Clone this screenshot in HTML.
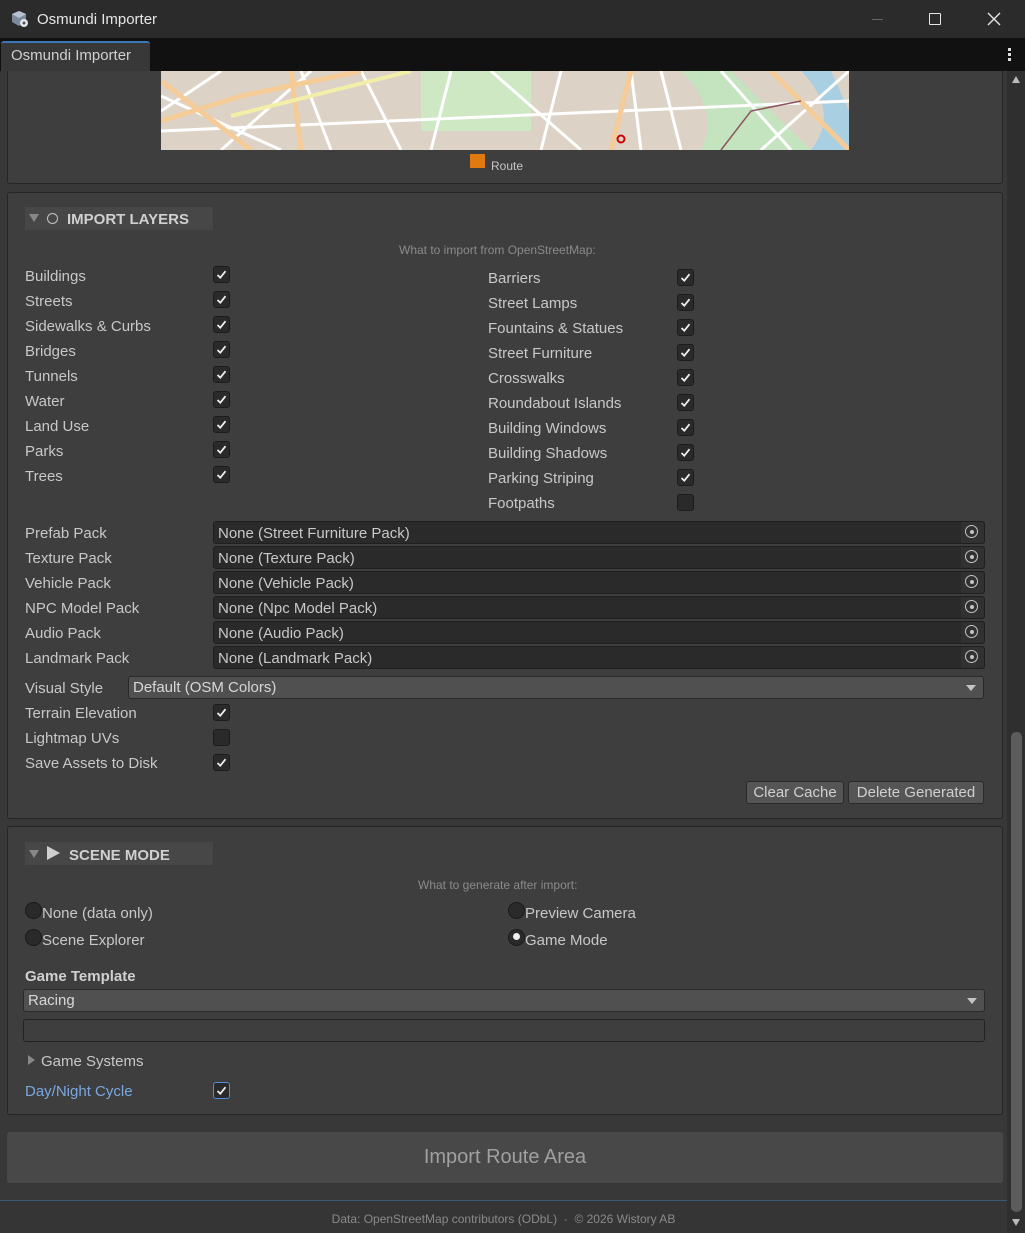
<!DOCTYPE html>
<html><head><meta charset="utf-8"><style>
*{box-sizing:border-box;margin:0;padding:0}
body{width:1025px;height:1233px;background:#383838;font-family:"Liberation Sans",sans-serif;color:#c8c8c8;font-size:15px;position:relative;overflow:hidden}
.a{position:absolute}
.lbl{position:absolute;line-height:18px;white-space:nowrap;padding-top:2px}
.cb{position:absolute;width:17px;height:17px;background:#2a2a2a;border:1px solid #1c1c1c;border-radius:3px}
.cb svg{position:absolute;left:2px;top:2px}
.of{position:absolute;left:213px;width:772px;height:23px;background:#2a2a2a;border:1px solid #1f1f1f;border-radius:3px;line-height:23px;padding-left:4px}
.of .t{position:absolute;right:0;top:0;width:23px;height:21px;background:#313131;border-radius:0 3px 3px 0}
.of .t:after{content:"";position:absolute;left:4px;top:3px;width:13px;height:13px;border:1.5px solid #c4c4c4;border-radius:50%;box-sizing:border-box}
.of .t:before{content:"";position:absolute;left:8.5px;top:7.5px;width:4px;height:4px;background:#c4c4c4;border-radius:50%;z-index:1}
.panel{position:absolute;left:7px;width:996px;background:#3e3e3e;border:1px solid #262626;border-radius:3px}
.btn{position:absolute;height:23px;background:#555;border:1px solid #2a2a2a;border-radius:3px;line-height:22px;text-align:center;color:#d0d0d0}
.dd{position:absolute;height:23px;background:#505050;border:1px solid #2a2a2a;border-radius:3px;line-height:22px;padding-left:4px;color:#d8d8d8}
.dd:after{content:"";position:absolute;right:7px;top:8px;border-left:5px solid transparent;border-right:5px solid transparent;border-top:6px solid #c4c4c4}
.rd{position:absolute;width:17px;height:17px;border-radius:50%;background:#2a2a2a;border:1px solid #1a1a1a}
</style></head><body>
<!-- title bar -->
<div class="a" style="left:0;top:0;width:1025px;height:38px;background:#2b2b2b"></div>
<svg class="a" style="left:11px;top:10px" width="18" height="18" viewBox="0 0 18 18"><path d="M8 1 L15 4 L15 12 L8 16 L1 12 L1 4Z" fill="#7d8a9c"/><path d="M8 1 L15 4 L8 8 L1 4Z" fill="#b7c2d0"/><circle cx="13" cy="13" r="4" fill="#dfe6ee"/><circle cx="13" cy="13" r="1.5" fill="#555"/></svg>
<div class="lbl" style="left:37px;top:9px;color:#e6e6e6">Osmundi Importer</div>
<div class="a" style="left:872px;top:19px;width:11px;height:1px;background:#666"></div>
<div class="a" style="left:929px;top:13px;width:12px;height:12px;border:1.5px solid #e6e6e6;border-radius:1px"></div>
<svg class="a" style="left:987px;top:12px" width="14" height="14"><path d="M1 1L13 13M13 1L1 13" stroke="#e6e6e6" stroke-width="1.4"/></svg>
<!-- tab strip -->
<div class="a" style="left:0;top:38px;width:1025px;height:33px;background:#111"></div>
<div class="a" style="left:1px;top:41px;width:149px;height:30px;background:#383838;border-top:2px solid #3a78b5;border-radius:3px 3px 0 0"></div>
<div class="lbl" style="left:11px;top:45px;color:#d0d0d0">Osmundi Importer</div>
<div class="a" style="left:1008px;top:48px;width:3px;height:3px;background:#ddd;box-shadow:0 5px #ddd,0 10px #ddd"></div>
<!-- scrollbar -->
<div class="a" style="left:1007px;top:71px;width:18px;height:1162px;background:#2f2f2f"></div>
<div class="a" style="left:1011px;top:732px;width:11px;height:480px;background:#5c5c5c;border-radius:5px"></div>
<div class="a" style="left:1012px;top:76px;border-left:4px solid transparent;border-right:4px solid transparent;border-bottom:7px solid #bbb"></div>
<div class="a" style="left:1012px;top:1219px;border-left:4px solid transparent;border-right:4px solid transparent;border-top:7px solid #bbb"></div>
<!-- map panel -->
<div class="panel" style="top:71px;height:113px;border-top:none;border-radius:0 0 3px 3px"></div>
<svg class="a" style="left:161px;top:71px" width="688" height="79" viewBox="0 0 688 79">
<rect width="688" height="79" fill="#dcd2c6"/>
<rect x="260" y="0" width="110" height="60" fill="#cde8c2"/>
<path d="M520 0 Q560 40 540 79 L650 79 Q610 40 570 0Z" fill="#c4e3bf"/>
<path d="M640 0 L670 0 L688 40 L688 79 L650 79 Q680 40 640 0Z" fill="#a9cfe2"/>
<path d="M0 25 L120 79 M60 79 L150 0 M140 0 L170 79 M290 0 L270 79 M470 0 L480 79 M560 0 L630 79 M0 60 L688 30 M330 0 L420 79 M600 79 L688 0 M200 0 L240 79 M0 40 L60 0 M380 79 L400 0 M500 0 L520 79" stroke="#fff" stroke-width="3" fill="none"/>
<path d="M0 10 L90 79 M130 0 L140 79 M0 50 L80 25 L200 0 M470 0 L450 79 M610 0 L688 79" stroke="#f5cc97" stroke-width="5" fill="none"/>
<path d="M70 45 L250 0" stroke="#f3efa8" stroke-width="4"/>
<path d="M560 79 L590 40 L640 30" stroke="#8a5560" stroke-width="1.5" fill="none"/>
<circle cx="460" cy="68" r="3.5" fill="none" stroke="#c00" stroke-width="2"/>
</svg>
<div class="a" style="left:470px;top:154px;width:15px;height:14px;background:#e07a10"></div>
<div class="lbl" style="left:491px;top:155px;font-size:12px;color:#c8c8c8">Route</div>
<!-- import layers -->
<div class="panel" style="top:192px;height:627px"></div>
<div class="a" style="left:25px;top:207px;width:188px;height:23px;background:#474747"></div>
<div class="a" style="left:29px;top:214px;border-left:5px solid transparent;border-right:5px solid transparent;border-top:8px solid #888"></div>
<div class="a" style="left:47px;top:213px;width:11px;height:11px;border:1.5px solid #c4c4c4;border-radius:50%"></div>
<div class="lbl" style="left:67px;top:209px;font-weight:bold;color:#d0d0d0">IMPORT LAYERS</div>
<div class="lbl" style="left:399px;top:239px;font-size:12px;color:#8a8a8a">What to import from OpenStreetMap:</div>

<div class="lbl" style="left:25px;top:266px">Buildings</div>
<div class="lbl" style="left:25px;top:291px">Streets</div>
<div class="lbl" style="left:25px;top:316px">Sidewalks &amp; Curbs</div>
<div class="lbl" style="left:25px;top:341px">Bridges</div>
<div class="lbl" style="left:25px;top:366px">Tunnels</div>
<div class="lbl" style="left:25px;top:391px">Water</div>
<div class="lbl" style="left:25px;top:416px">Land Use</div>
<div class="lbl" style="left:25px;top:441px">Parks</div>
<div class="lbl" style="left:25px;top:466px">Trees</div>

<div class="lbl" style="left:488px;top:268px">Barriers</div>
<div class="lbl" style="left:488px;top:293px">Street Lamps</div>
<div class="lbl" style="left:488px;top:318px">Fountains &amp; Statues</div>
<div class="lbl" style="left:488px;top:343px">Street Furniture</div>
<div class="lbl" style="left:488px;top:368px">Crosswalks</div>
<div class="lbl" style="left:488px;top:393px">Roundabout Islands</div>
<div class="lbl" style="left:488px;top:418px">Building Windows</div>
<div class="lbl" style="left:488px;top:443px">Building Shadows</div>
<div class="lbl" style="left:488px;top:468px">Parking Striping</div>
<div class="lbl" style="left:488px;top:493px">Footpaths</div>

<div class="lbl" style="left:25px;top:523px">Prefab Pack</div>
<div class="lbl" style="left:25px;top:548px">Texture Pack</div>
<div class="lbl" style="left:25px;top:573px">Vehicle Pack</div>
<div class="lbl" style="left:25px;top:598px">NPC Model Pack</div>
<div class="lbl" style="left:25px;top:623px">Audio Pack</div>
<div class="lbl" style="left:25px;top:648px">Landmark Pack</div>
<div class="of" style="top:521px">None (Street Furniture Pack)<div class="t"></div></div>
<div class="of" style="top:546px">None (Texture Pack)<div class="t"></div></div>
<div class="of" style="top:571px">None (Vehicle Pack)<div class="t"></div></div>
<div class="of" style="top:596px">None (Npc Model Pack)<div class="t"></div></div>
<div class="of" style="top:621px">None (Audio Pack)<div class="t"></div></div>
<div class="of" style="top:646px">None (Landmark Pack)<div class="t"></div></div>

<div class="lbl" style="left:25px;top:678px">Visual Style</div>
<div class="dd" style="left:128px;top:676px;width:856px">Default (OSM Colors)</div>
<div class="lbl" style="left:25px;top:703px">Terrain Elevation</div>
<div class="lbl" style="left:25px;top:728px">Lightmap UVs</div>
<div class="lbl" style="left:25px;top:753px">Save Assets to Disk</div>
<div class="btn" style="left:746px;top:781px;width:98px">Clear Cache</div>
<div class="btn" style="left:848px;top:781px;width:136px">Delete Generated</div>

<!-- scene mode -->
<div class="panel" style="top:826px;height:289px"></div>
<div class="a" style="left:25px;top:842px;width:188px;height:23px;background:#474747"></div>
<div class="a" style="left:29px;top:850px;border-left:5px solid transparent;border-right:5px solid transparent;border-top:8px solid #888"></div>
<div class="a" style="left:47px;top:846px;border-top:7px solid transparent;border-bottom:7px solid transparent;border-left:13px solid #d0d0d0"></div>
<div class="lbl" style="left:69px;top:845px;font-weight:bold;color:#d0d0d0">SCENE MODE</div>
<div class="lbl" style="left:418px;top:874px;font-size:12px;color:#8a8a8a">What to generate after import:</div>
<div class="rd" style="left:25px;top:902px"></div><div class="lbl" style="left:42px;top:903px">None (data only)</div>
<div class="rd" style="left:25px;top:929px"></div><div class="lbl" style="left:42px;top:930px">Scene Explorer</div>
<div class="rd" style="left:508px;top:902px"></div><div class="lbl" style="left:525px;top:903px">Preview Camera</div>
<div class="rd" style="left:508px;top:929px"><div class="a" style="left:4px;top:3px;width:7px;height:7px;background:#eee;border-radius:50%"></div></div><div class="lbl" style="left:525px;top:930px">Game Mode</div>
<div class="lbl" style="left:25px;top:966px;font-weight:bold;color:#d0d0d0">Game Template</div>
<div class="dd" style="left:23px;top:989px;width:962px">Racing</div>
<div class="a" style="left:23px;top:1019px;width:962px;height:23px;background:#3e3e3e;border:1px solid #222;border-radius:3px"></div>
<div class="a" style="left:28px;top:1055px;border-top:5px solid transparent;border-bottom:5px solid transparent;border-left:7px solid #888"></div>
<div class="lbl" style="left:41px;top:1051px">Game Systems</div>
<div class="lbl" style="left:25px;top:1081px;color:#7aa7e0">Day/Night Cycle</div>

<div class="a" style="left:7px;top:1132px;width:996px;height:51px;background:#484848;border-radius:3px"></div>
<div class="lbl" style="left:0;width:1010px;text-align:center;top:1146px;font-size:20px;color:#a0a0a0">Import Route Area</div>
<div class="a" style="left:0;top:1200px;width:1007px;height:1px;background:#3a5878"></div>
<div class="a" style="left:0;top:1201px;width:1007px;height:32px;background:#353535"></div>
<div class="lbl" style="left:0;width:1007px;text-align:center;top:1208px;font-size:12px;color:#8a8a8a">Data: OpenStreetMap contributors (ODbL) &nbsp;·&nbsp; © 2026 Wistory AB</div>

<div id="cbs"></div>
<script>
var ck='<svg width="11" height="11" viewBox="0 0 11 11"><path d="M1.5 6 L4.3 8.7 L9.5 2.2" stroke="#eee" stroke-width="1.8" fill="none"/></svg>';
var h='';
function add(x,y,c,blue){h+='<div class="cb" style="left:'+x+'px;top:'+y+'px'+(blue?';border-color:#4d8fd9':'')+'">'+(c?ck:'')+'</div>';}
for(var i=0;i<9;i++)add(213,266+25*i,1);
for(var i=0;i<10;i++)add(677,269+25*i,i<9);
add(213,704,1);add(213,729,0);add(213,754,1);add(213,1082,1,1);
document.getElementById('cbs').innerHTML=h;
</script>
</body></html>
